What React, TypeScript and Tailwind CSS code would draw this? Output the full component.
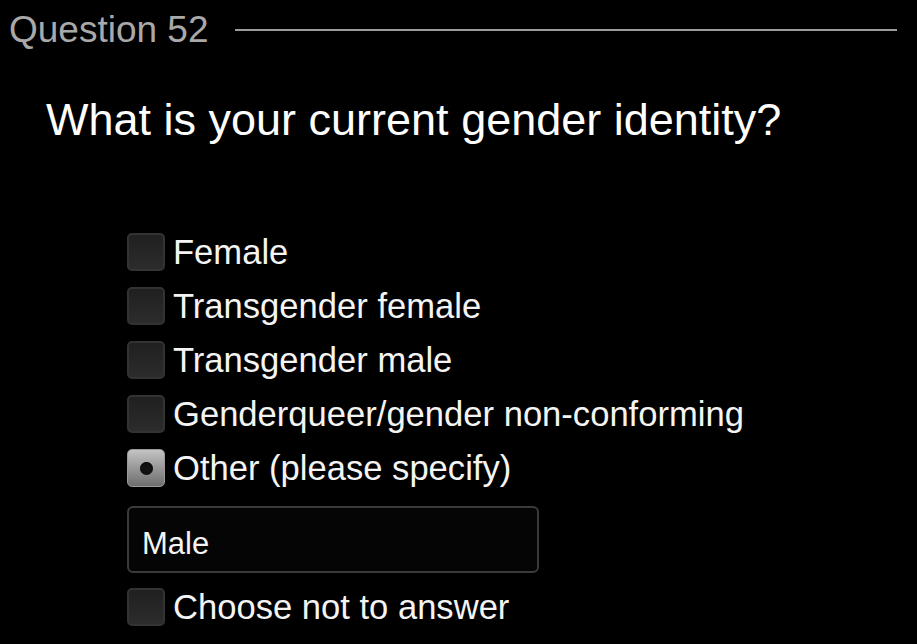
import React from "react";

const options = [
  { label: "Female", checked: false },
  { label: "Transgender female", checked: false },
  { label: "Transgender male", checked: false },
  { label: "Genderqueer/gender non-conforming", checked: false },
  { label: "Other (please specify)", checked: true },
];

const Box = ({ checked }: { checked: boolean }) =>
  checked ? (
    <div className="w-[38px] h-[38px] shrink-0 rounded-[5px] border border-[#9a9a9a] bg-gradient-to-b from-[#c4c4c4] to-[#6e6e6e] flex items-center justify-center">
      <div className="w-[13px] h-[13px] rounded-full bg-[#111] shadow-[inset_0_1px_2px_rgba(0,0,0,0.8)]" />
    </div>
  ) : (
    <div className="w-[38px] h-[38px] shrink-0 rounded-[5px] border-2 border-[#333] bg-gradient-to-b from-[#202020] to-[#2c2c2c]" />
  );

const Row = ({ label, checked }: { label: string; checked: boolean }) => (
  <div className="flex items-center gap-[8px] h-[38px]">
    <Box checked={checked} />
    <span className="text-[34.6px] leading-none text-[#f4f4f4] whitespace-nowrap">{label}</span>
  </div>
);

export default function App() {
  return (
    <div
      className="w-[917px] h-[644px] bg-black overflow-hidden"
      style={{ fontFamily: '"Liberation Sans", Arial, sans-serif' }}
    >
      {/* header */}
      <div className="flex items-center h-[58px] pl-[9px] pr-[20px]">
        <span className="text-[37px] leading-none text-[#a9a9a9]">Question 52</span>
        <div className="flex-1 ml-[26px] h-[2px] bg-[#9c9c9c] mt-[2px]" />
      </div>

      <h1 className="mt-[36px] pl-[46px] text-[45px] leading-[52px] text-white">
        What is your current gender identity?
      </h1>

      <div className="mt-[87px] pl-[127px] flex flex-col gap-[16px]">
        {options.map((o) => (
          <Row key={o.label} label={o.label} checked={o.checked} />
        ))}
      </div>

      <div className="ml-[127px] mt-[19px] w-[412px] h-[67px] rounded-[6px] border-2 border-[#3a3a3a] bg-[#050505] flex items-center px-[13px] pt-[8px]">
        <span className="text-[31px] leading-none text-[#f4f4f4]">Male</span>
      </div>

      <div className="ml-[127px] mt-[15px]">
        <Row label="Choose not to answer" checked={false} />
      </div>
    </div>
  );
}
